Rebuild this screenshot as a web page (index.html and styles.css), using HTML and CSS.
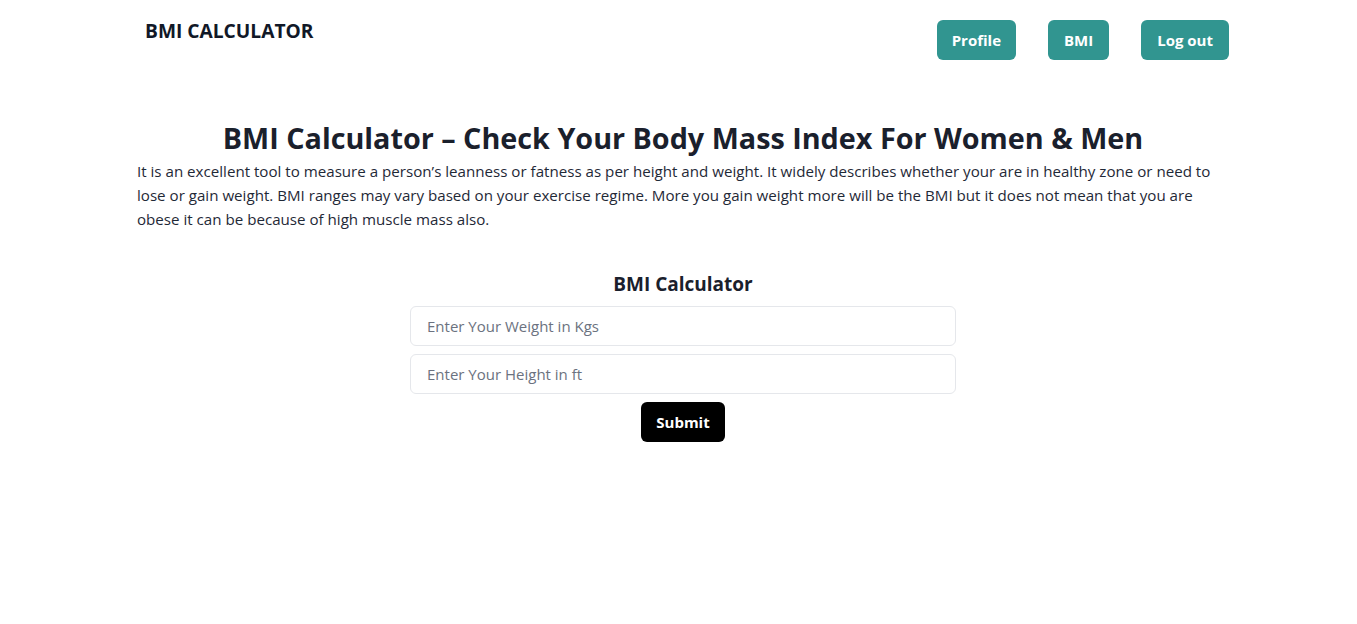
FILE: index.html
```html
<!DOCTYPE html>
<html lang="en">
<head>
<meta charset="utf-8">
<title>BMI Calculator</title>
<link rel="stylesheet" href="styles.css">
</head>
<body>
<div class="wrap">
  <nav class="nav">
    <div class="logo">BMI CALCULATOR</div>
    <div class="links">
      <a class="btn teal narrow" href="#">Profile</a>
      <a class="btn teal" href="#">BMI</a>
      <a class="btn teal" href="#">Log out</a>
    </div>
  </nav>
  <main class="main">
    <h1 class="title">BMI Calculator – Check Your Body Mass Index For Women &amp; Men</h1>
    <p class="intro">It is an excellent tool to measure a person’s leanness or fatness as per height and weight. It widely describes whether your are in healthy zone or need to lose or gain weight. BMI ranges may vary based on your exercise regime. More you gain weight more will be the BMI but it does not mean that you are obese it can be because of high muscle mass also.</p>
    <form class="form">
      <h2 class="form-title">BMI Calculator</h2>
      <input class="field" type="text" placeholder="Enter Your Weight in Kgs">
      <input class="field" type="text" placeholder="Enter Your Height in ft">
      <button class="btn black submit" type="button">Submit</button>
    </form>
  </main>
</div>
</body>
</html>
```

FILE: styles.css
```css
* { box-sizing: border-box; }
body {
  margin: 0;
  background: #fff;
  color: #1f2937;
  font-family: "Open Sans", "Noto Sans", sans-serif;
}
.wrap {
  width: 1092px;
  margin-left: 137px;
}
.nav {
  display: flex;
  justify-content: space-between;
  align-items: flex-start;
  padding-top: 20px;
}
.logo {
  font-size: 19.2px;
  font-weight: 700;
  color: #111827;
  padding-left: 8px;
  line-height: 22px;
}
.links {
  display: flex;
  gap: 32px;
}
.btn {
  display: inline-block;
  height: 40px;
  line-height: 40px;
  padding: 0 16px;
  border: none;
  border-radius: 6px;
  font-family: inherit;
  font-size: 15px;
  font-weight: 700;
  color: #fff;
  text-decoration: none;
  cursor: pointer;
}
.narrow { padding: 0 15px; }
.submit { padding: 0 15px; }
.teal { background: #319590; }
.black { background: #000; }
.main {
  padding-top: 60px;
}
.title {
  margin: 0 0 3px;
  text-align: center;
  font-size: 28.75px;
  line-height: 36px;
  font-weight: 700;
  color: #1a202c;
}
.intro {
  margin: 0;
  font-size: 15.13px;
  line-height: 24px;
  color: #1f2937;
}
.form {
  width: 546px;
  margin: 37px auto 0;
  display: flex;
  flex-direction: column;
  align-items: center;
  gap: 8px;
}
.form-title {
  margin: 0;
  padding-top: 2px;
  font-size: 19px;
  line-height: 28px;
  font-weight: 700;
  color: #1a202c;
}
.field {
  width: 100%;
  height: 40px;
  padding: 0 16px;
  border: 1px solid #e5e7eb;
  border-radius: 6px;
  font-family: inherit;
  font-size: 15px;
  color: #1f2937;
  outline: none;
}
.field::placeholder { color: #6b7280; }
```
